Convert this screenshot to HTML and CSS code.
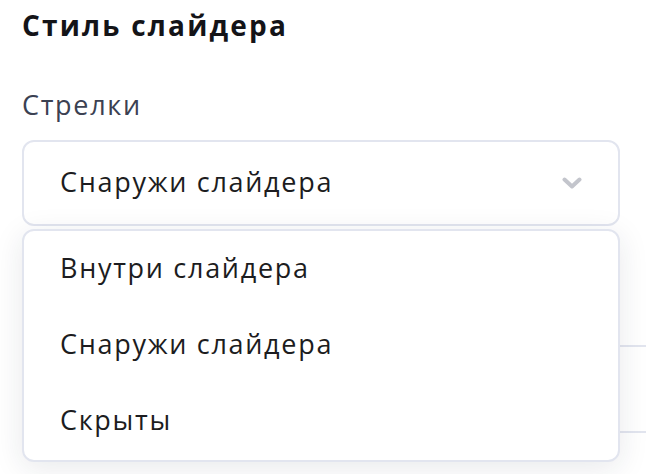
FILE: index.html
```html
<!DOCTYPE html>
<html lang="ru">
<head>
<meta charset="utf-8">
<link rel="stylesheet" href="styles.css">
</head>
<body>
<div class="panel">
  <h2 class="title">Стиль слайдера</h2>
  <div class="field">
    <div class="label">Стрелки</div>
    <div class="select-wrap">
      <div class="select">
        <span class="select-value">Снаружи слайдера</span>
        <svg class="chevron" width="20" height="13" viewBox="0 0 20 13"><path d="M2.5 2.5 L10 9.5 L17.5 2.5" fill="none" stroke="#c3c5cc" stroke-width="4" stroke-linecap="round" stroke-linejoin="round"/></svg>
      </div>
      <ul class="menu">
        <li class="menu-item">Внутри слайдера</li>
        <li class="menu-item">Снаружи слайдера</li>
        <li class="menu-item">Скрыты</li>
      </ul>
    </div>
  </div>
  <div class="rows">
    <div class="row row-a"></div>
    <div class="row row-b"></div>
  </div>
</div>
</body>
</html>
```
FILE: styles.css
```css
html, body {
  margin: 0;
  padding: 0;
  background: #ffffff;
}
body {
  font-family: "Open Sans", "Noto Sans", sans-serif;
  color: #1f1f24;
}
.panel {
  min-height: 474px;
  box-sizing: border-box;
  padding: 0 26px 0 22px;
}
.title {
  margin: 0;
  padding-top: 5px;
  font-size: 28px;
  line-height: 40px;
  font-weight: 700;
  letter-spacing: 2.2px;
  color: #141418;
}
.field {
  margin-top: 43px;
}
.label {
  font-size: 27px;
  line-height: 34px;
  letter-spacing: 1.7px;
  color: #3b4152;
}
.select-wrap {
  position: relative;
  margin-top: 18px;
}
.select {
  box-sizing: border-box;
  height: 86px;
  border: 2px solid #e2e5ef;
  border-radius: 12px;
  display: flex;
  align-items: center;
  justify-content: space-between;
  padding: 0 36px 4px 36px;
  background: #ffffff;
}
.select-value {
  font-size: 27px;
  letter-spacing: 1.7px;
  color: #1c1c20;
}
.chevron {
  display: block;
  margin-top: 4px;
}
.menu {
  position: absolute;
  top: 89px;
  left: 0;
  right: 0;
  box-sizing: border-box;
  height: 233px;
  margin: 0;
  padding: 0;
  list-style: none;
  background: #ffffff;
  border: 2px solid #e2e5ef;
  border-radius: 12px;
  box-shadow: 0 6px 30px rgba(30, 35, 60, 0.1);
  z-index: 2;
  display: flex;
  flex-direction: column;
}
.menu-item {
  flex: 1;
  display: flex;
  align-items: center;
  padding: 0 36px 4px;
  font-size: 27px;
  letter-spacing: 1.7px;
  color: #1c1c20;
}
.rows {
  margin-right: -26px;
}
.row {
  border-bottom: 2px solid #e2e5ef;
}
.row-a {
  height: 119px;
}
.row-b {
  height: 84px;
}
```
